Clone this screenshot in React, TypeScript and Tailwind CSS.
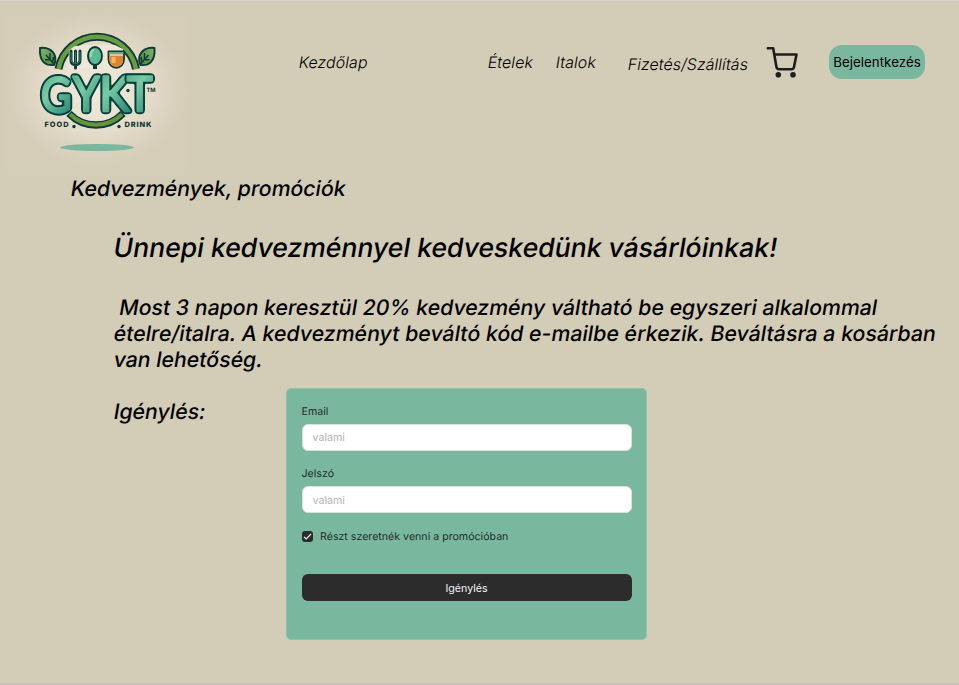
import React from "react";

function Leaf({ mirrored = false }: { mirrored?: boolean }) {
  return (
    <g transform={mirrored ? "translate(194.5 0) scale(-1 1)" : undefined}>
      <path d="M40 48c7-1 13 2 15 8 1 4 0 7-1 9-8 1-15-3-14-17Z" fill="url(#leaf)" stroke="#0c3a36" strokeWidth="1.900" strokeLinejoin="round" />
      <path d="m46 55 8 9M50 53v6.500l-5 .3M53.500 57l-1 5" fill="none" stroke="#0c3a36" strokeWidth="1.400" />
    </g>
  );
}

function Logo() {
  const letters = [
    { ch: "G", x: 41, y: 112, w: 30.5 },
    { ch: "Y", x: 73, y: 111, w: 26.5 },
    { ch: "K", x: 99.5, y: 111, w: 30 },
    { ch: "T", x: 127, y: 111, w: 25.5 },
  ];
  return (
    <svg width="194" height="170" viewBox="0 0 194 170" className="block shrink-0" role="img" aria-label="GYKT">
      <defs>
        <radialGradient id="glow">
          <stop offset="0" stopColor="#f1eadc" />
          <stop offset=".45" stopColor="#e9e1d0" />
          <stop offset=".75" stopColor="#ddd5c1" />
          <stop offset="1" stopColor="#d5cdb8" />
        </radialGradient>
        <linearGradient id="leaf" x1="0" y1="0" x2="1" y2="1">
          <stop offset="0" stopColor="#81b76f" />
          <stop offset="1" stopColor="#4c8138" />
        </linearGradient>
        <linearGradient id="letter" x1="0" y1="0" x2=".7" y2="1">
          <stop offset="0" stopColor="#4fa588" />
          <stop offset=".45" stopColor="#7acaa5" />
          <stop offset="1" stopColor="#2b8975" />
        </linearGradient>
        <filter id="outline" x="-25%" y="-20%" width="150%" height="140%" colorInterpolationFilters="sRGB">
          <feGaussianBlur in="SourceAlpha" stdDeviation="1.700" />
          <feComponentTransfer result="grown">
            <feFuncA type="linear" slope="10" intercept="-.4" />
          </feComponentTransfer>
          <feFlood floodColor="#073f3b" />
          <feComposite in2="grown" operator="in" result="edge" />
          <feMerge>
            <feMergeNode in="edge" />
            <feMergeNode in="SourceGraphic" />
          </feMerge>
        </filter>
      </defs>
      <rect x="6" y="16" width="182" height="153" fill="#d5cdb8" />
      <ellipse cx="97" cy="90" rx="91" ry="76" fill="url(#glow)" />
      <path d="M58.500 69A39.400 39.400 0 0 1 136 69" fill="none" stroke="#0c3a36" strokeWidth="8" />
      <path d="M58.500 69A39.400 39.400 0 0 1 136 69" fill="none" stroke="#6b9b43" strokeWidth="4.400" />
      <path d="M69 50l6-4 12-1h28l8 4 3 20H68Z" fill="#eee7d7" />
      <Leaf />
      <Leaf mirrored />
      <path d="M71 51v9c0 3 2 4.500 4.500 4.500S80 63 80 60v-9M75.500 51v17" fill="none" stroke="#0c3a36" strokeWidth="3" strokeLinecap="round" />
      <path d="M71 52v8c0 2 2 3.500 4.500 3.500S80 62 80 60v-8M75.500 52v11" fill="none" stroke="#388b7b" strokeWidth=".8" />
      <path d="M95 64v5" stroke="#0c3a36" strokeWidth="4" />
      <ellipse cx="95" cy="56" rx="7" ry="9" fill="#5eb997" stroke="#0c3a36" strokeWidth="1.900" />
      <path d="M91 57c-1-4 1-7 3-7" fill="none" stroke="#a5ddb9" strokeWidth="2" />
      <path d="M108.500 51.500h15.500v8c0 11-15.500 11-15.500 0Z" fill="#dec69e" stroke="#0c3a36" strokeWidth="1.800" strokeLinejoin="round" />
      <path d="M109.500 56h13.500v4c0 9-13.500 9-13.500 0Z" fill="#df842d" />
      <path d="M109 53h14.500" stroke="#70a58a" strokeWidth="2" />
      <path d="M111.500 57h4v6h-4z" fill="#f4b56a" />
      <path d="M69 113.500A37.400 37.400 0 0 0 123 113.500" fill="none" stroke="#0c3a36" strokeWidth="7.500" />
      <path d="M70 114.300A37.400 37.400 0 0 0 122 114.300" fill="none" stroke="#68923b" strokeWidth="4" />
      <g fontFamily="Lato, sans-serif" fontWeight="400" fontSize="48" fill="url(#letter)" stroke="url(#letter)" strokeWidth="2.600" strokeLinejoin="round">
        {letters.map((l) => (
          <text key={l.ch} x={l.x} y={l.y} textLength={l.w} lengthAdjust="spacingAndGlyphs" filter="url(#outline)">{l.ch}</text>
        ))}
      </g>
      <circle cx="128" cy="90.500" r="1.700" fill="#073f3b" />
      <g fontFamily="Inter, sans-serif" fill="#12342f">
        <text x="146.500" y="92" fontSize="6" fontWeight="700" textLength="9" lengthAdjust="spacingAndGlyphs">TM</text>
        <text x="44.500" y="127" fontSize="7.400" fontWeight="800" textLength="24">FOOD</text>
        <text x="124.500" y="127" fontSize="7.400" fontWeight="800" textLength="27">DRINK</text>
      </g>
      <circle cx="74" cy="126.500" r="1.700" fill="#12342f" />
      <circle cx="119" cy="126.500" r="1.700" fill="#12342f" />
      <ellipse cx="97" cy="147.500" rx="37" ry="3.500" fill="#7ab79f" />
    </svg>
  );
}

// Slants the upright face, keeping its double-storey letterforms.
function Slanted({ children }: { children: React.ReactNode }) {
  return <span className="block w-fit origin-[0_45%] -skew-x-[9.4deg] whitespace-pre">{children}</span>;
}

function Field({ label }: { label: string }) {
  return (
    <label className="block">
      <span className="block h-[16px] leading-[16px] text-[#1e2e28]">{label}</span>
      <input
        placeholder="valami"
        className="mt-[4px] block h-[27px] w-full rounded-[6px] border border-[#d5e4dd] bg-white px-[10px] pt-px text-[10.630px] text-[#1e1e1e] outline-none placeholder:text-[#b3b3b3]"
      />
    </label>
  );
}

export default function App() {
  return (
    <div className="h-[685px] w-[959px] overflow-hidden border-t border-b-2 border-t-[#d3d2cb] border-b-[#c6c4bb] bg-[#d3ccb6] font-['Inter',sans-serif] text-black [font-optical-sizing:none] [text-rendering:geometricPrecision]">
      <header className="-mt-px flex h-[170px] items-start">
        <Logo />
        <nav className="flex items-start whitespace-nowrap text-[15.950px] font-light leading-[20px] tracking-[0.080px]">
          <a className="ml-[105px] mt-[53px] w-[189px]"><Slanted>Kezdőlap</Slanted></a>
          <a className="mt-[53px] w-[68px]"><Slanted>Ételek</Slanted></a>
          <a className="mt-[53px] w-[71.500px]"><Slanted>Italok</Slanted></a>
          <a className="mt-[55px] w-[137.500px]"><Slanted>Fizetés/Szállítás</Slanted></a>
        </nav>
        <svg width="34" height="34" viewBox="0 0 34 34" className="mt-[46px] block shrink-0" fill="none" stroke="#1e1e1e" strokeWidth="2.600" strokeLinecap="round" strokeLinejoin="round">
          <path d="M2.800 2.300h5.400l3.200 18.500c.3 1.600 1.200 2.400 2.500 2.400h12.700c1.300 0 2.100-.8 2.400-2.200l2.500-12.500H9.300" />
          <circle cx="13.300" cy="28.700" r="1.500" fill="#1e1e1e" />
          <circle cx="28" cy="28.700" r="1.500" fill="#1e1e1e" />
        </svg>
        <button className="ml-[30px] mt-[45px] h-[34px] w-[96px] shrink-0 whitespace-nowrap rounded-[13px] bg-[#7ab79f] pt-px text-[13.290px] tracking-[0.040px]">Bejelentkezés</button>
      </header>
      <main className="font-medium">
        <h1 className="ml-[71px] mt-[6px] text-[21.260px] font-medium leading-[26px]"><Slanted>Kedvezmények, promóciók</Slanted></h1>
        <section className="ml-[113.500px] mt-[29px]">
          <h2 className="text-[26.580px] font-medium leading-[34px]"><Slanted>Ünnepi kedvezménnyel kedveskedünk vásárlóinkak!</Slanted></h2>
          <p className="mt-[30px] text-[21.260px] leading-[26px]">
            <Slanted>{" Most 3 napon keresztül 20% kedvezmény váltható be egyszeri alkalommal"}</Slanted>
            <span className="block tracking-[0.030px]"><Slanted>ételre/italra. A kedvezményt beváltó kód e-mailbe érkezik. Beváltásra a kosárban</Slanted></span>
            <Slanted>van lehetőség.</Slanted>
          </p>
          <div className="mt-[15px] flex items-start">
            <p className="mt-[11px] w-[172.500px] text-[21.260px] leading-[26px]"><Slanted>Igénylés:</Slanted></p>
            <form className="h-[252px] w-[361px] rounded-[5px] border border-[#93c0aa] bg-[#7ab79f] px-[14.500px] pt-[14.500px] text-[10.630px] font-normal">
              <Field label="Email" />
              <div className="mt-[15.700px]"><Field label="Jelszó" /></div>
              <div className="mt-[15.300px] flex h-[16px] items-center text-[#1e2e28]">
                <span className="flex h-[11px] w-[11px] items-center justify-center rounded-[3px] bg-[#2c2c2c]">
                  <svg width="9" height="9" viewBox="0 0 9 9" fill="none" stroke="#f5f5f5" strokeWidth="1.200"><path d="m1 4.800 2.200 2.200L8 2" /></svg>
                </span>
                <span className="ml-[7.500px]">Részt szeretnék venni a promócióban</span>
              </div>
              <button type="button" className="mt-[29.500px] block h-[27px] w-full rounded-[6px] bg-[#2c2c2c] pt-[2px] text-[10.630px] text-[#f5f5f5]">Igénylés</button>
            </form>
          </div>
        </section>
      </main>
    </div>
  );
}
